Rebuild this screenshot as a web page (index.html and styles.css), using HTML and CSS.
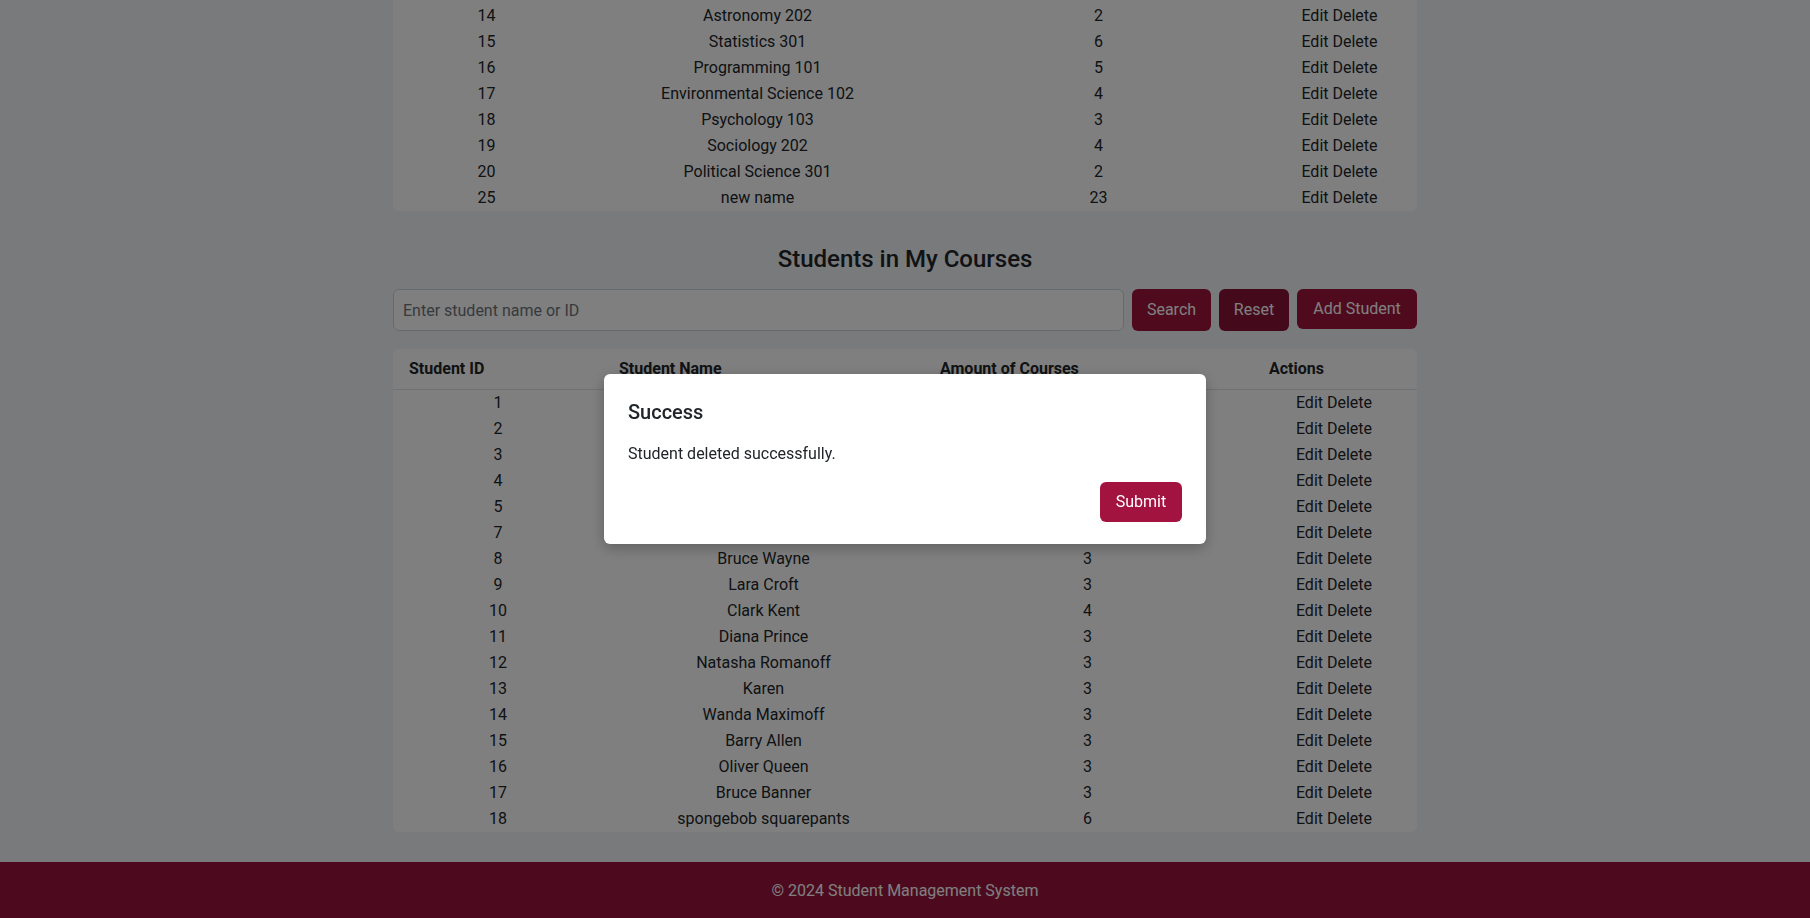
FILE: index.html
```html
<!DOCTYPE html>
<html lang="en">
<head>
<meta charset="utf-8">
<title>Student Management System</title>
<link rel="stylesheet" href="styles.css">
</head>
<body>
<div class="page">
  <main class="container">
    <div class="card course-card">
      <table class="data-table course-table">
        <colgroup><col class="c-id"><col class="c-name"><col class="c-credits"><col class="c-actions"></colgroup>
        <tbody>
          <tr><td>14</td><td>Astronomy 202</td><td>2</td><td>Edit Delete</td></tr>
          <tr><td>15</td><td>Statistics 301</td><td>6</td><td>Edit Delete</td></tr>
          <tr><td>16</td><td>Programming 101</td><td>5</td><td>Edit Delete</td></tr>
          <tr><td>17</td><td>Environmental Science 102</td><td>4</td><td>Edit Delete</td></tr>
          <tr><td>18</td><td>Psychology 103</td><td>3</td><td>Edit Delete</td></tr>
          <tr><td>19</td><td>Sociology 202</td><td>4</td><td>Edit Delete</td></tr>
          <tr><td>20</td><td>Political Science 301</td><td>2</td><td>Edit Delete</td></tr>
          <tr><td>25</td><td>new name</td><td>23</td><td>Edit Delete</td></tr>
        </tbody>
      </table>
    </div>

    <h2 class="section-title">Students in My Courses</h2>

    <div class="search-bar">
      <input class="search-input" type="text" placeholder="Enter student name or ID">
      <button class="btn btn-search">Search</button>
      <button class="btn btn-reset">Reset</button>
      <button class="btn btn-add">Add Student</button>
    </div>

    <div class="card student-card">
      <table class="data-table student-table">
        <colgroup><col class="s-id"><col class="s-name"><col class="s-courses"><col class="s-actions"></colgroup>
        <thead>
          <tr><th>Student ID</th><th>Student Name</th><th>Amount of Courses</th><th>Actions</th></tr>
        </thead>
        <tbody>
          <tr><td>1</td><td></td><td></td><td>Edit Delete</td></tr>
          <tr><td>2</td><td></td><td></td><td>Edit Delete</td></tr>
          <tr><td>3</td><td></td><td></td><td>Edit Delete</td></tr>
          <tr><td>4</td><td></td><td></td><td>Edit Delete</td></tr>
          <tr><td>5</td><td></td><td></td><td>Edit Delete</td></tr>
          <tr><td>7</td><td></td><td></td><td>Edit Delete</td></tr>
          <tr><td>8</td><td>Bruce Wayne</td><td>3</td><td>Edit Delete</td></tr>
          <tr><td>9</td><td>Lara Croft</td><td>3</td><td>Edit Delete</td></tr>
          <tr><td>10</td><td>Clark Kent</td><td>4</td><td>Edit Delete</td></tr>
          <tr><td>11</td><td>Diana Prince</td><td>3</td><td>Edit Delete</td></tr>
          <tr><td>12</td><td>Natasha Romanoff</td><td>3</td><td>Edit Delete</td></tr>
          <tr><td>13</td><td>Karen</td><td>3</td><td>Edit Delete</td></tr>
          <tr><td>14</td><td>Wanda Maximoff</td><td>3</td><td>Edit Delete</td></tr>
          <tr><td>15</td><td>Barry Allen</td><td>3</td><td>Edit Delete</td></tr>
          <tr><td>16</td><td>Oliver Queen</td><td>3</td><td>Edit Delete</td></tr>
          <tr><td>17</td><td>Bruce Banner</td><td>3</td><td>Edit Delete</td></tr>
          <tr><td>18</td><td>spongebob squarepants</td><td>6</td><td>Edit Delete</td></tr>
        </tbody>
      </table>
    </div>
  </main>

  <footer class="footer">© 2024 Student Management System</footer>
</div>

<div class="backdrop">
  <div class="modal">
    <h5 class="modal-title">Success</h5>
    <p class="modal-body">Student deleted successfully.</p>
    <div class="modal-footer">
      <button class="btn btn-submit">Submit</button>
    </div>
  </div>
</div>
</body>
</html>
```

FILE: styles.css
```css
* { box-sizing: border-box; }

html, body {
  margin: 0;
  padding: 0;
  height: 100%;
  overflow: hidden;
}

body {
  background: #f3f4f8;
  color: #212529;
  font-family: "Segoe UI", Roboto, "Noto Sans", sans-serif;
  font-size: 16px;
  line-height: 1.5;
}

.page {
  display: flex;
  flex-direction: column;
  min-height: 100%;
}

.container {
  width: 1024px;
  margin: 0 auto;
  flex: 1;
}

.card {
  background: #ffffff;
  border-radius: 0 0 6px 6px;
}

.course-card {
  padding-top: 3px;
}

.data-table {
  width: 100%;
  border-collapse: collapse;
  table-layout: fixed;
}

.data-table td {
  text-align: center;
  padding: 1px 8px;
  line-height: 24px;
  white-space: nowrap;
}

.c-id { width: 187px; }
.c-name { width: 355px; }
.c-credits { width: 327px; }
.c-actions { width: 155px; }

.s-id { width: 210px; }
.s-name { width: 321px; }
.s-courses { width: 327px; }
.s-actions { width: 166px; }

.section-title {
  margin: 34px 0 15px;
  font-size: 24px;
  font-weight: 500;
  line-height: 29px;
  text-align: center;
}

.search-bar {
  display: flex;
  gap: 8px;
  align-items: flex-start;
  margin-bottom: 18px;
}

.search-input {
  flex: 1;
  height: 42px;
  padding: 8px 9px;
  border: 1px solid #ced4da;
  border-radius: 6px;
  background: #ffffff;
  font: inherit;
  color: #212529;
}

.search-input::placeholder { color: #6c757d; }

.btn {
  border: none;
  border-radius: 6px;
  color: #ffffff;
  font: inherit;
  line-height: 24px;
  padding: 9px 14px;
  background: #9e153d;
  cursor: pointer;
}

.btn-search { width: 79px; }
.btn-reset { width: 70px; background: #8a1238; }
.btn-add { width: 120px; padding-top: 8px; padding-bottom: 8px; }

.student-card {
  border-radius: 6px;
}

.data-table th {
  text-align: left;
  font-weight: 700;
  padding: 8px 16px;
  line-height: 24px;
  border-bottom: 1px solid #dee2e6;
  white-space: nowrap;
}

.student-table th:last-child { padding-left: 18px; }

.footer {
  margin-top: 30px;
  height: 57px;
  background: #9a143c;
  color: #ffffff;
  display: flex;
  align-items: center;
  justify-content: center;
  font-size: 16px;
}

.backdrop {
  position: fixed;
  inset: 0;
  background: rgba(0, 0, 0, 0.5);
  display: flex;
  align-items: center;
  justify-content: center;
}

.modal {
  width: 602px;
  background: #ffffff;
  border-radius: 6px;
  padding: 24px 24px 22px;
  box-shadow: 0 4px 14px rgba(0, 0, 0, 0.25);
}

.modal-title {
  margin: 0;
  font-size: 20px;
  font-weight: 500;
  line-height: 28px;
}

.modal-body {
  margin: 16px 0 0;
  line-height: 24px;
}

.modal-footer {
  display: flex;
  justify-content: flex-end;
  margin-top: 16px;
}

.btn-submit {
  width: 82px;
  height: 40px;
  padding: 8px 12px;
  background: #a3133f;
}
```
